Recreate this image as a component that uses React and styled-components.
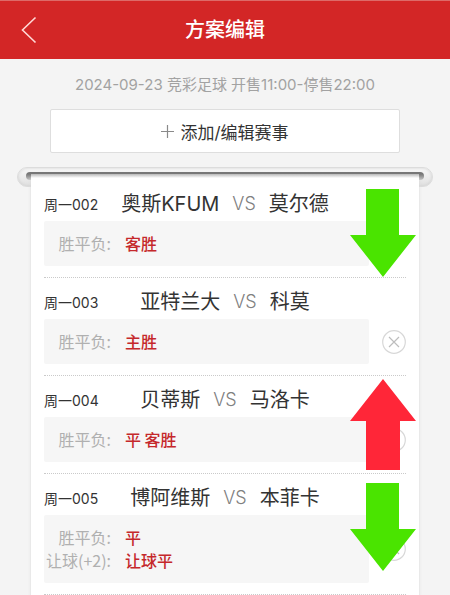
import React from 'react';
import styled, { createGlobalStyle } from 'styled-components';

const matches = [
  {
    id: '周一002',
    home: '奥斯KFUM',
    away: '莫尔德',
    trend: 'down',
    picks: [{ label: '胜平负:', value: '客胜' }],
  },
  {
    id: '周一003',
    home: '亚特兰大',
    away: '科莫',
    removable: true,
    picks: [{ label: '胜平负:', value: '主胜' }],
  },
  {
    id: '周一004',
    home: '贝蒂斯',
    away: '马洛卡',
    trend: 'up',
    removable: true,
    picks: [{ label: '胜平负:', value: '平 客胜' }],
  },
  {
    id: '周一005',
    home: '博阿维斯',
    away: '本菲卡',
    trend: 'down',
    removable: true,
    picks: [
      { label: '胜平负:', value: '平' },
      { label: '让球(+2):', value: '让球平' },
    ],
  },
];

const TrendArrow = ({ trend }) => (
  <ArrowIcon trend={trend} viewBox="0 0 66 91" aria-hidden="true">
    {trend === 'up' ? (
      <path d="M33 0 L66 42 H50 V91 H16 V42 H0 Z" fill="#ff2638" />
    ) : (
      <path d="M16 0 H49 V46 H66 L33 88 L0 46 H16 Z" fill="#4ae400" />
    )}
  </ArrowIcon>
);

const Match = ({ match }) => (
  <MatchItem>
    <MatchTitle>
      <MatchId>{match.id}</MatchId>
      <Teams>
        <span>{match.home}</span>
        <Versus>VS</Versus>
        <span>{match.away}</span>
      </Teams>
    </MatchTitle>
    <MatchBody>
      <Picks>
        {match.picks.map((pick) => (
          <Pick key={pick.label}>
            <PickLabel>{pick.label}</PickLabel>
            <PickValue>{pick.value}</PickValue>
          </Pick>
        ))}
      </Picks>
      {match.removable && (
        <RemoveButton type="button" aria-label={`删除 ${match.id}`}>
          <svg width="24" height="24" viewBox="0 0 24 24" fill="none">
            <circle cx="12" cy="12" r="11.3" stroke="#d8d8d8" strokeWidth="1.2" />
            <path d="M7 7 L17 17 M17 7 L7 17" stroke="#bdbdbd" strokeWidth="1.2" />
          </svg>
        </RemoveButton>
      )}
    </MatchBody>
    {match.trend && <TrendArrow trend={match.trend} />}
  </MatchItem>
);

const App = () => {
  return (
    <Page>
      <GlobalStyle />
      <Header>
        <BackButton type="button" aria-label="返回">
          <svg width="16" height="28" viewBox="0 0 16 28" fill="none">
            <path d="M14.5 1.5 L1.5 14 L14.5 26.5" stroke="#ffd9d6" strokeWidth="1.6" />
          </svg>
        </BackButton>
        <Title>方案编辑</Title>
      </Header>
      <SaleTime>2024-09-23 竞彩足球 开售11:00-停售22:00</SaleTime>
      <AddButton type="button">
        <svg width="13" height="13" viewBox="0 0 13 13" fill="none" aria-hidden="true">
          <path d="M6.5 0 V13 M0 6.5 H13" stroke="#8a8a8a" strokeWidth="1.2" />
        </svg>
        添加/编辑赛事
      </AddButton>
      <Printer>
        <Slot>
          <SlotGap />
        </Slot>
        <Paper>
          {matches.map((match) => (
            <Match key={match.id} match={match} />
          ))}
        </Paper>
      </Printer>
    </Page>
  );
};

const GlobalStyle = createGlobalStyle`
  * {
    box-sizing: border-box;
  }

  body {
    margin: 0;
    background: #f4f4f4;
    font-family: Inter, 'Noto Sans CJK SC', sans-serif;
    color: #333;
  }

  button {
    font-family: inherit;
    cursor: pointer;
  }
`;

const Page = styled.div`
  display: flex;
  flex-direction: column;
  min-height: 100vh;
  overflow: hidden;
`;

const Header = styled.header`
  display: grid;
  grid-template-columns: 60px 1fr 60px;
  align-items: center;
  height: 59px;
  background: #d32626;
  border-top: 1px solid #dd6a68;
`;

const BackButton = styled.button`
  display: flex;
  padding: 0 0 0 21px;
  border: none;
  background: none;
`;

const Title = styled.h1`
  margin: 0;
  font-size: 20px;
  line-height: 28px;
  font-weight: 500;
  text-align: center;
  color: #fff;
`;

const SaleTime = styled.p`
  margin: 14px 0 12px;
  font-size: 15px;
  line-height: 24px;
  text-align: center;
  white-space: nowrap;
  color: #a2a2a2;
`;

const AddButton = styled.button`
  display: flex;
  align-items: center;
  justify-content: center;
  gap: 6px;
  height: 44px;
  margin: 0 50px;
  padding: 0;
  border: 1px solid #dedede;
  border-radius: 2px;
  background: #fff;
  font-size: 17px;
  color: #333;
`;

const Printer = styled.section`
  display: flex;
  flex-direction: column;
  flex: 1;
  margin: 14px 17px 0;
`;

const Slot = styled.div`
  height: 20px;
  padding: 4px 8px;
  border: 1px solid #dcdcdc;
  border-radius: 10px;
  background: linear-gradient(#f8f8f8, #e0e0e0);
  box-shadow: inset 0 0 3px #cfcfcf;
`;

const SlotGap = styled.div`
  height: 8px;
  border-radius: 4px;
  background: linear-gradient(#777 2px, #c4c4c4);
`;

const Paper = styled.ul`
  position: relative;
  flex: 1;
  margin: -13px 14px 0;
  padding: 6px 13px 0;
  list-style: none;
  background: linear-gradient(#b8b8b8, #fff 4px);
  box-shadow: 0 4px 3px #d8d8d8;
`;

const MatchItem = styled.li`
  position: relative;
  padding: 10px 0 11px;
  border-bottom: 1px dotted #cacaca;
`;

const MatchTitle = styled.div`
  display: grid;
  grid-template-columns: 1fr auto 1fr;
  align-items: center;
  height: 28px;
  margin-bottom: 3px;
`;

const MatchId = styled.span`
  font-size: 14px;
  white-space: nowrap;
`;

const Teams = styled.div`
  display: flex;
  align-items: center;
  gap: 13px;
  font-size: 20px;
  line-height: 28px;
  white-space: nowrap;
`;

const Versus = styled.span`
  font-size: 18px;
  font-weight: 300;
  color: #808080;
`;

const MatchBody = styled.div`
  display: grid;
  grid-template-columns: 1fr 24px;
  align-items: center;
  gap: 13px;
`;

const Picks = styled.dl`
  margin: 0;
  padding: 11px 0;
  border-radius: 2px;
  background: #f6f6f6;
`;

const Pick = styled.div`
  display: flex;
  gap: 14px;
  font-family: 'Noto Sans CJK SC', sans-serif;
  font-size: 16px;
  line-height: 23px;
`;

const PickLabel = styled.dt`
  width: 67px;
  text-align: right;
  white-space: nowrap;
  color: #b0b0b0;
`;

const PickValue = styled.dd`
  margin: 0;
  font-weight: 500;
  color: #c5282b;
`;

const RemoveButton = styled.button`
  display: flex;
  padding: 0;
  border: none;
  background: none;
`;

const ArrowIcon = styled.svg`
  position: absolute;
  top: ${(props) => (props.trend === 'up' ? '3px' : '9px')};
  right: -10px;
  width: 66px;
  height: 91px;
`;

export default App;
